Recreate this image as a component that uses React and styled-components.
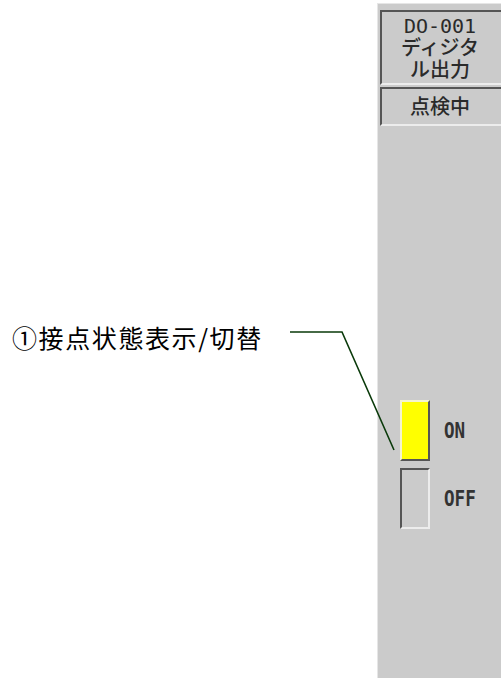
import React from "react";
import styled, { createGlobalStyle } from "styled-components";

const Global = createGlobalStyle`
  html, body {
    margin: 0;
    padding: 0;
    background: #fff;
    overflow: hidden;
  }
`;

export default function App() {
  return (
    <>
      <Global />
      <Page>
        <Notes>
          <Label>①接点状態表示/切替</Label>
        </Notes>
        <Panel>
          <TitleBox>
            <TitleLine>DO-001</TitleLine>
            <TitleLine>ディジタ</TitleLine>
            <TitleLine>ル出力</TitleLine>
          </TitleBox>
          <ModeBox>点検中</ModeBox>
          <Switches>
            <SwitchRow>
              <Lamp on>{""}</Lamp>
              <LampText>ON</LampText>
            </SwitchRow>
            <SwitchRow>
              <Lamp />
              <LampText>OFF</LampText>
            </SwitchRow>
          </Switches>
        </Panel>
        <Callout width="501" height="678">
          <polyline
            points="290,332 342,332 394,450"
            fill="none"
            stroke="#0a3a0a"
            strokeWidth="1.6"
          />
        </Callout>
      </Page>
    </>
  );
}

const Page = styled.div`
  position: relative;
  display: flex;
  width: 501px;
  height: 678px;
  overflow: hidden;
`;

const Notes = styled.div`
  width: 377px;
  flex-shrink: 0;
  padding: 320px 0 0 12px;
  box-sizing: border-box;
`;

const Label = styled.div`
  font-family: "Noto Sans CJK JP", sans-serif;
  font-size: 25px;
  line-height: 34px;
  letter-spacing: 1.6px;
  color: #000;
  white-space: nowrap;
`;

const Panel = styled.div`
  margin-top: 3px;
  width: 140px;
  flex-shrink: 0;
  height: 675px;
  background: #cbcbcb;
  border-top: 1px solid #e6e6e6;
  border-left: 1px solid #e6e6e6;
  box-sizing: border-box;
  padding: 6px 0 0 2px;
  display: flex;
  flex-direction: column;
`;

const SunkenBox = styled.div`
  width: 132px;
  box-sizing: border-box;
  border-top: 2px solid #555;
  border-left: 2px solid #555;
  border-bottom: 2px solid #ececec;
  border-right: 2px solid #ececec;
  font-family: "DejaVu Sans Mono", "Noto Sans CJK JP", monospace;
  color: #2a2a2a;
  padding-right: 12px;
  text-align: center;
`;

const TitleBox = styled(SunkenBox)`
  height: 75px;
  padding-top: 3px;
`;

const TitleLine = styled.div`
  font-size: 20px;
  line-height: 22px;
  font-weight: 500;
`;

const ModeBox = styled(SunkenBox)`
  margin-top: 2px;
  height: 39px;
  font-size: 20px;
  line-height: 36px;
  font-weight: 500;
`;

const Switches = styled.div`
  margin-top: 274px;
  padding-left: 20px;
  display: flex;
  flex-direction: column;
  gap: 7px;
`;

const SwitchRow = styled.div`
  display: flex;
  align-items: center;
  gap: 14px;
`;

const Lamp = styled.div`
  width: 30px;
  height: 61px;
  box-sizing: border-box;
  background: ${({ on }) => (on ? "#ffff00" : "#cbcbcb")};
  border-top: 2px solid ${({ on }) => (on ? "#f4f4d0" : "#555")};
  border-left: 2px solid ${({ on }) => (on ? "#f4f4d0" : "#555")};
  border-bottom: 2px solid ${({ on }) => (on ? "#555" : "#ececec")};
  border-right: 2px solid ${({ on }) => (on ? "#555" : "#ececec")};
`;

const LampText = styled.div`
  font-family: "DejaVu Sans Mono", monospace;
  font-size: 22px;
  font-weight: bold;
  color: #333;
  transform: scaleX(0.8);
  transform-origin: left center;
`;

const Callout = styled.svg`
  position: absolute;
  left: 0;
  top: 0;
  pointer-events: none;
`;
